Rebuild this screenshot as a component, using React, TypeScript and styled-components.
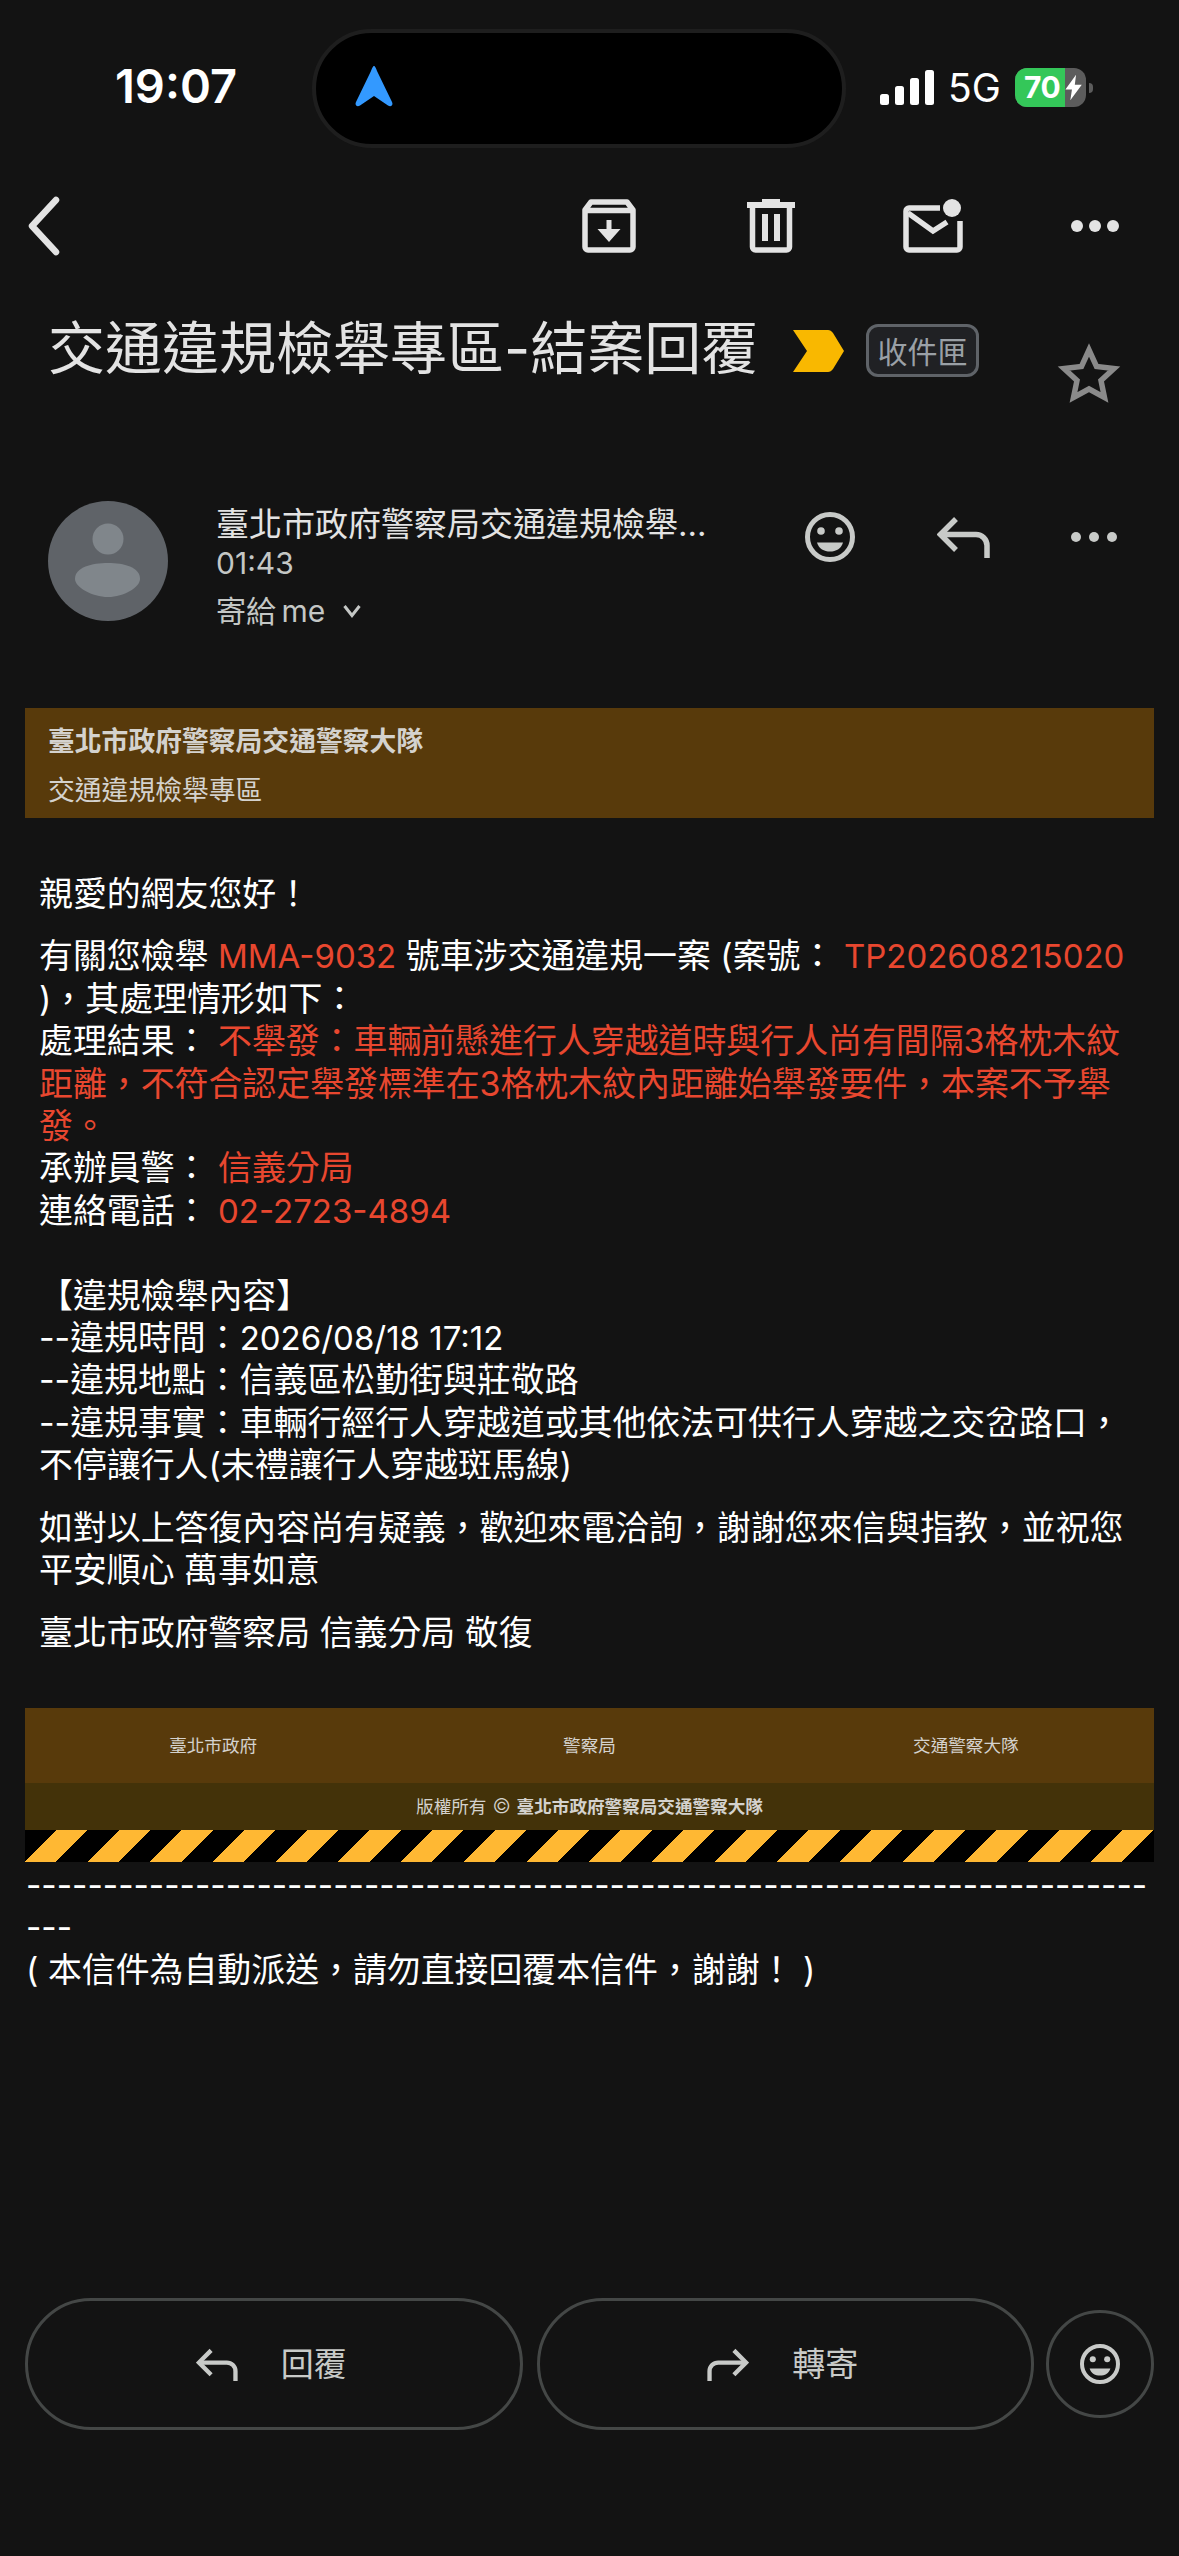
import React from "react";
import styled, { createGlobalStyle } from "styled-components";

const Global = createGlobalStyle`
  html, body { margin: 0; padding: 0; background: #131313; }
  * { box-sizing: border-box; }
`;

const FONT = `Inter, "Noto Sans CJK TC", sans-serif`;
const CJK = `"Noto Sans CJK TC", sans-serif`;

const Page = styled.div`
  width: 1179px;
  height: 2556px;
  background: #131313;
  overflow: hidden;
  display: flex;
  flex-direction: column;
  font-family: ${FONT};
`;

const StatusBar = styled.div`
  display: flex;
  align-items: center;
  height: 119px;
  margin-top: 29px;
  padding-left: 115px;
`;
const Time = styled.div`
  width: 197px;
  font-size: 47px;
  font-weight: 600;
  color: #fff;
  line-height: 1;
  margin-top: -6px;
`;
const Island = styled.div`
  width: 534px;
  height: 119px;
  border-radius: 60px;
  background: #000;
  border: 4px solid #1e1e1e;
  display: flex;
  align-items: flex-start;
  padding: 33px 0 0 39px;
`;
const StatusRight = styled.div`
  display: flex;
  align-items: center;
  margin-left: 34px;
  margin-top: -2px;
`;
const FiveG = styled.div`
  font-size: 39px;
  color: #fff;
  font-weight: 400;
  line-height: 1;
  margin-left: 14px;
  width: 67px;
`;
const Battery = styled.div`
  width: 71px;
  height: 39px;
  border-radius: 12px;
  background: #5c5c5c;
  overflow: hidden;
  display: flex;
  align-items: center;
`;
const BatteryFill = styled.div`
  flex: none;
  width: 50px;
  height: 39px;
  background: #34c759;
  color: #fff;
  font-size: 30px;
  font-weight: 700;
  line-height: 39px;
  padding-left: 9px;
  letter-spacing: -0.5px;
`;
const Bolt = styled.svg`
  flex: none;
  margin-left: -2px;
`;
const Nub = styled.div`
  width: 4px;
  height: 10px;
  margin-left: 3px;
  background: #5c5c5c;
  border-radius: 0 5px 5px 0;
`;

const Toolbar = styled.div`
  display: flex;
  align-items: center;
  height: 62px;
  margin-top: 47px;
  padding-left: 28px;
`;
const ToolIcon = styled.svg<{ $left: number }>`
  display: block;
  flex: none;
  margin-left: ${(p) => p.$left}px;
`;

const TitleRow = styled.div`
  display: flex;
  align-items: flex-start;
  margin-top: 64px;
  padding-left: 48px;
  height: 85px;
`;
const Title = styled.div`
  font-size: 57px;
  line-height: 56px;
  color: #e3e3e3;
  white-space: nowrap;
  width: 745px;
`;
const Chevron = styled.svg`
  flex: none;
  margin-top: 9px;
`;
const Badge = styled.div`
  width: 113px;
  height: 53px;
  border: 3px solid #5f6368;
  border-radius: 12px;
  background: #202124;
  color: #9aa0a6;
  font-size: 30px;
  line-height: 46px;
  text-align: center;
  margin-left: 21px;
  margin-top: 3px;
  font-family: ${CJK};
`;
const Star = styled.svg`
  flex: none;
  margin-left: 78px;
  margin-top: 21px;
`;

const SenderRow = styled.div`
  display: flex;
  align-items: flex-start;
  margin-top: 95px;
  padding-left: 48px;
  height: 207px;
`;
const Avatar = styled.svg`
  display: block;
  flex: none;
`;
const SenderInfo = styled.div`
  margin-left: 48px;
  width: 589px;
  display: flex;
  flex-direction: column;
  padding-top: 2px;
`;
const SenderName = styled.div`
  font-size: 33px;
  line-height: 42px;
  color: #e3e3e3;
  white-space: nowrap;
`;
const SenderTime = styled.div`
  font-size: 30px;
  line-height: 42px;
  margin-top: -3px;
  color: #c4c7c5;
`;
const SenderTo = styled.div`
  display: flex;
  align-items: center;
  gap: 18px;
  font-size: 30px;
  line-height: 42px;
  margin-top: 6px;
  color: #c4c7c5;
  word-spacing: -3px;
`;
const SenderActions = styled.div`
  display: flex;
  align-items: center;
  height: 50px;
  margin-top: 11px;
`;

const Banner = styled.div`
  margin: 0 25px;
  height: 110px;
  background: #583a0b;
  padding: 16px 23px 0;
  color: #d4d2ce;
  font-size: 26.8px;
  line-height: 34px;
`;
const BannerTitle = styled.div`
  font-weight: 700;
  margin-bottom: 15px;
`;

const Body = styled.div`
  padding: 55px 0 0 39px;
  color: #fff;
  font-size: 33.9px;
  line-height: 42.4px;
  white-space: nowrap;
`;
const Para = styled.div`
  margin-bottom: 20px;
`;
const Red = styled.span`
  color: #e8472f;
`;
const Latin = styled.span`
  font-size: 33px;
`;
const RedLatin = styled(Red)`
  font-size: 33px;
`;

const Footer = styled.div`
  margin: 34px 25px 0;
  color: #d4d2ce;
  font-size: 17.6px;
`;
const FooterLinks = styled.div`
  display: grid;
  grid-template-columns: repeat(3, 1fr);
  height: 75px;
  background: #583a0b;
  text-align: center;
  line-height: 75px;
`;
const Copy = styled.div`
  height: 47px;
  background: #433209;
  text-align: center;
  line-height: 47px;
`;
const CopyMark = styled.span`
  font-weight: 300;
  font-size: 20px;
  margin: 0 1px;
`;
const Stripes = styled.div`
  height: 32px;
  background: repeating-linear-gradient(135deg, #000 0, #000 22.17px, #ffb833 22.17px, #ffb833 44.34px);
`;

const Closing = styled.div`
  padding: 2px 0 0 26px;
  font-size: 33.9px;
  line-height: 42.4px;
  color: #fff;
  white-space: nowrap;
`;
const DashRule = styled.span`
  font-size: 33.4px;
`;

const Actions = styled.div`
  display: flex;
  align-items: center;
  gap: 14px;
  margin-top: auto;
  margin-bottom: 126px;
  padding: 0 25px;
`;
const PillButton = styled.div`
  flex: 1;
  height: 132px;
  border: 3px solid #444746;
  border-radius: 66px;
  display: flex;
  align-items: center;
  justify-content: center;
  gap: 43px;
  padding-right: 5px;
  color: #c8cac8;
  font-size: 33px;
  font-family: ${CJK};
`;
const PillLabel = styled.span`
  margin-top: -4px;
`;
const RoundButton = styled.div`
  flex: none;
  width: 108px;
  height: 108px;
  margin-left: -2px;
  border: 3px solid #444746;
  border-radius: 50%;
  display: flex;
  align-items: center;
  justify-content: center;
`;

const Smile = ({ size, left = 0 }: { size: number; left?: number }) => (
  <ToolIcon $left={left} width={size} height={size} viewBox="0 0 50 50">
    <circle cx="25" cy="25" r="22.5" fill="none" stroke="#c8cac8" strokeWidth="5" />
    <circle cx="16" cy="19" r="3.8" fill="#c8cac8" />
    <circle cx="34" cy="19" r="3.8" fill="#c8cac8" />
    <path d="M12 30.5H38C36 37 31 39.5 25 39.5S14 37 12 30.5Z" fill="#c8cac8" />
  </ToolIcon>
);
const Dots = ({ left, color, r, gap }: { left: number; color: string; r: number; gap: number }) => (
  <ToolIcon $left={left} width={gap * 2 + r * 2} height={r * 2} viewBox={`0 0 ${gap * 2 + r * 2} ${r * 2}`}>
    <circle cx={r} cy={r} r={r} fill={color} />
    <circle cx={r + gap} cy={r} r={r} fill={color} />
    <circle cx={r + gap * 2} cy={r} r={r} fill={color} />
  </ToolIcon>
);
const Reply = ({ w, h, left = 0, flip = false }: { w: number; h: number; left?: number; flip?: boolean }) => (
  <ToolIcon $left={left} width={w} height={h} viewBox="0 0 53 42">
    <g transform={flip ? "translate(53 0) scale(-1 1)" : undefined} fill="none" stroke="#c8cac8" strokeWidth="5.5">
      <path d="M19 3L3.5 18.5L19 34" />
      <path d="M3.5 18.5H39A11 11 0 0 1 50 29.5V42" />
    </g>
  </ToolIcon>
);

export default function App() {
  return (
    <Page>
      <Global />
      <StatusBar>
        <Time>19:07</Time>
        <Island>
          <svg width="38" height="41" viewBox="0 0 38 41">
            <path d="M19 0C20 0 21 2 22 5L37 36C38.500 39 36 41.500 33 39.500L19 30L5 39.500C2 41.500 -0.500 39 1 36L16 5C17 2 18 0 19 0Z" fill="#3399ff" />
          </svg>
        </Island>
        <StatusRight>
          <svg width="54" height="35" viewBox="0 0 54 35">
            <rect x="0" y="24" width="9" height="11" rx="2.500" fill="#fff" />
            <rect x="15" y="16" width="9" height="19" rx="2.500" fill="#fff" />
            <rect x="30" y="8" width="9" height="27" rx="2.500" fill="#fff" />
            <rect x="45" y="0" width="9" height="35" rx="2.500" fill="#fff" />
          </svg>
          <FiveG>5G</FiveG>
          <Battery>
            <BatteryFill>70</BatteryFill>
            <Bolt width="22" height="27" viewBox="0 0 21 33">
              <path d="M13 1L0 19H8L6 32L20 13H11.500Z" fill="#fff" />
            </Bolt>
          </Battery>
          <Nub />
        </StatusRight>
      </StatusBar>

      <Toolbar>
        <ToolIcon $left={-2} width="36" height="60" viewBox="0 0 36 60">
          <path d="M30 4L6 30L30 56" fill="none" stroke="#e3e3e3" strokeWidth="6.500" strokeLinecap="round" strokeLinejoin="round" />
        </ToolIcon>
        <ToolIcon $left={520} width="54" height="54" viewBox="0 0 54 54">
          <path d="M3 11L9 3H45L51 11V48A3 3 0 0 1 48 51H6A3 3 0 0 1 3 48Z M3 11.500H51" fill="none" stroke="#e3e3e3" strokeWidth="5.500" strokeLinejoin="round" />
          <path d="M24.500 21H29.500V30H38.500L27 43L15.500 30H24.500Z" fill="#e3e3e3" />
        </ToolIcon>
        <ToolIcon $left={111} width="48" height="54" viewBox="0 0 48 54">
          <path d="M15 0H33V3H48V9H0V3H15Z" fill="#e3e3e3" />
          <path d="M5.500 8V48A3 3 0 0 0 8.500 51H39.500A3 3 0 0 0 42.500 48V8" fill="none" stroke="#e3e3e3" strokeWidth="5.500" />
          <rect x="15" y="15" width="6" height="27" fill="#e3e3e3" />
          <rect x="27" y="15" width="6" height="27" fill="#e3e3e3" />
        </ToolIcon>
        <ToolIcon $left={108} width="60" height="54" viewBox="0 0 60 54">
          <path d="M37 9H6A3 3 0 0 0 3 12V48A3 3 0 0 0 6 51H54A3 3 0 0 0 57 48V22" fill="none" stroke="#e3e3e3" strokeWidth="5.500" />
          <path d="M5 14L30 32L44 23" fill="none" stroke="#e3e3e3" strokeWidth="5.500" />
          <ellipse cx="49" cy="9" rx="9" ry="9" fill="#e3e3e3" />
        </ToolIcon>
        <Dots left={108} color="#e3e3e3" r={6} gap={18} />
      </Toolbar>

      <TitleRow>
        <Title>交通違規檢舉專區-結案回覆</Title>
        <Chevron width="52" height="42" viewBox="0 0 52 42">
          <path d="M0 0H35C37 0 38.500 1 40 3L51 21L40 39C38.500 41 37 42 35 42H0L14 21Z" fill="#f9b800" />
        </Chevron>
        <Badge>收件匣</Badge>
        <Star width="64" height="62" viewBox="0 0 64 62">
          <path d="M32 8L39.500 24.500L57 26.500L44 38.500L47.500 55.500L32 47L16.500 55.500L20 38.500L7 26.500L24.500 24.500Z" fill="none" stroke="#8a8a8a" strokeWidth="5.500" />
        </Star>
      </TitleRow>

      <SenderRow>
        <Avatar width="120" height="120" viewBox="0 0 120 120">
          <circle cx="60" cy="60" r="60" fill="#5f6368" />
          <circle cx="60" cy="38" r="15.500" fill="#80868b" />
          <path d="M60 62C76 62 92 66 92 78C92 86 76 96 60 96C44 96 27 86 27 78C27 66 44 62 60 62Z" fill="#80868b" />
        </Avatar>
        <SenderInfo>
          <SenderName>臺北市政府警察局交通違規檢舉...</SenderName>
          <SenderTime>01:43</SenderTime>
          <SenderTo>
            寄給 me
            <svg width="18" height="14" viewBox="0 0 18 14">
              <path d="M1.500 2L9 11.500L16.500 2" fill="none" stroke="#c4c7c5" strokeWidth="3" />
            </svg>
          </SenderTo>
        </SenderInfo>
        <SenderActions>
          <Smile size={50} />
          <Reply w={53} h={42} left={82} />
          <Dots left={81} color="#c8cac8" r={5} gap={18} />
        </SenderActions>
      </SenderRow>

      <Banner>
        <BannerTitle>臺北市政府警察局交通警察大隊</BannerTitle>
        交通違規檢舉專區
      </Banner>

      <Body>
        <Para>親愛的網友您好！</Para>
        <Para>
          有關您檢舉 <RedLatin>MMA-9032</RedLatin> 號車涉交通違規一案 (案號： <RedLatin>TP202608215020</RedLatin>
          <br />
          )，其處理情形如下：
          <br />
          處理結果： <Red>不舉發：車輛前懸進行人穿越道時與行人尚有間隔3格枕木紋</Red>
          <br />
          <Red>距離，不符合認定舉發標準在3格枕木紋內距離始舉發要件，本案不予舉</Red>
          <br />
          <Red>發。</Red>
          <br />
          承辦員警： <Red>信義分局</Red>
          <br />
          連絡電話： <RedLatin>02-2723-4894</RedLatin>
          <br />
          <br />
          【違規檢舉內容】
          <br />
          --違規時間：<Latin>2026/08/18 17:12</Latin>
          <br />
          --違規地點：信義區松勤街與莊敬路
          <br />
          --違規事實：車輛行經行人穿越道或其他依法可供行人穿越之交岔路口，
          <br />
          不停讓行人(未禮讓行人穿越斑馬線)
        </Para>
        <Para>
          如對以上答復內容尚有疑義，歡迎來電洽詢，謝謝您來信與指教，並祝您
          <br />
          平安順心 萬事如意
        </Para>
        <Para>臺北市政府警察局 信義分局 敬復</Para>
      </Body>

      <Footer>
        <FooterLinks>
          <span>臺北市政府</span>
          <span>警察局</span>
          <span>交通警察大隊</span>
        </FooterLinks>
        <Copy>
          版權所有 <CopyMark>©</CopyMark> <b>臺北市政府警察局交通警察大隊</b>
        </Copy>
        <Stripes />
      </Footer>

      <Closing>
        <DashRule>
          {"-".repeat(73)}
          <br />
          ---
        </DashRule>
        <br />( 本信件為自動派送，請勿直接回覆本信件，謝謝！ )
      </Closing>

      <Actions>
        <PillButton>
          <Reply w={42} h={33} />
          <PillLabel>回覆</PillLabel>
        </PillButton>
        <PillButton>
          <Reply w={42} h={33} flip />
          <PillLabel>轉寄</PillLabel>
        </PillButton>
        <RoundButton>
          <Smile size={40} />
        </RoundButton>
      </Actions>
    </Page>
  );
}
